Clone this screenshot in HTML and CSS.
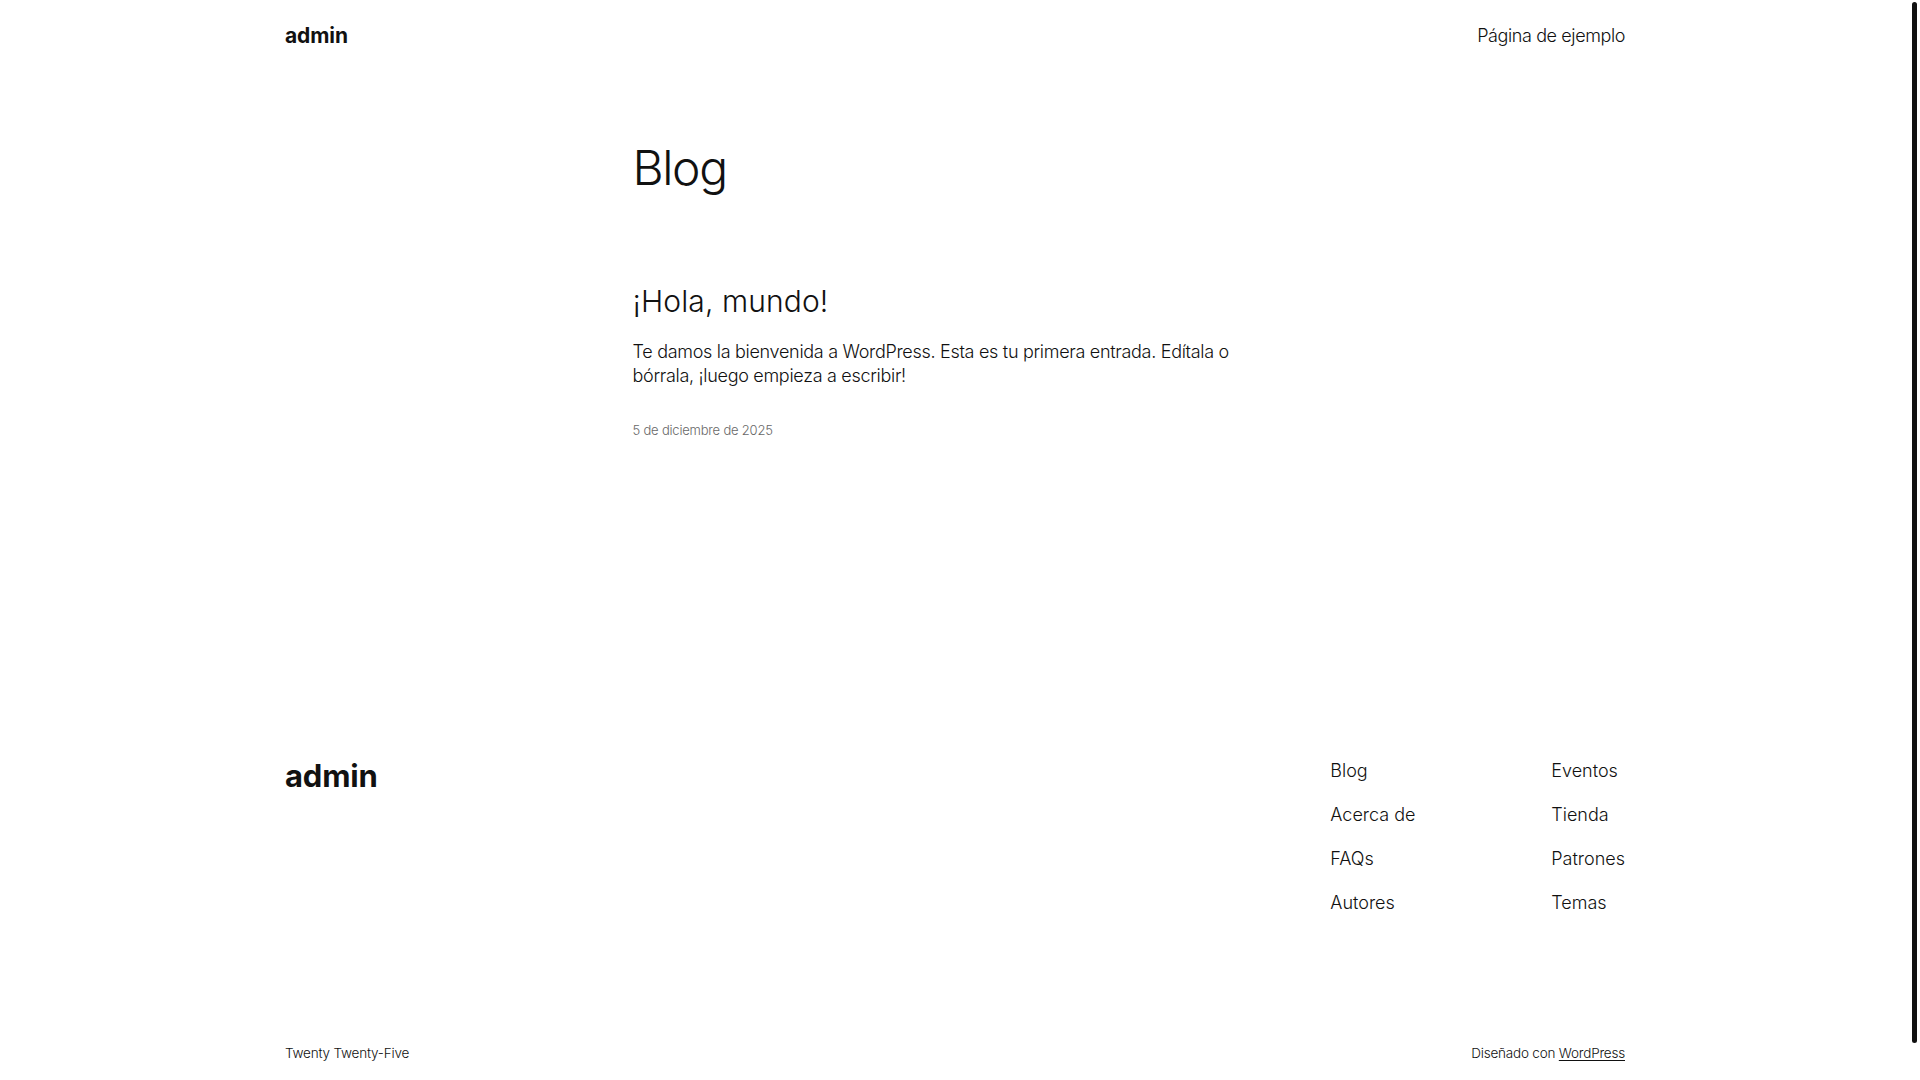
FILE: index.html
```html
<!DOCTYPE html>
<html lang="es">
<head>
<meta charset="utf-8">
<title>Blog – admin</title>
<link rel="stylesheet" href="styles.css">
</head>
<body>
<div class="scroll-thumb" aria-hidden="true"></div>
<header class="site-header">
  <div class="wrap header-row">
    <a class="site-title" href="#">admin</a>
    <nav class="header-nav"><a href="#">Página de ejemplo</a></nav>
  </div>
</header>
<main class="main">
  <div class="content">
    <h1 class="page-title">Blog</h1>
    <article class="post">
      <h2 class="post-title"><a href="#">¡Hola, mundo!</a></h2>
      <p class="excerpt">Te damos la bienvenida a WordPress. Esta es tu primera entrada. Edítala o bórrala, ¡luego empieza a escribir!</p>
      <time class="post-date">5 de diciembre de 2025</time>
    </article>
  </div>
</main>
<footer class="site-footer">
  <div class="wrap footer-top">
    <a class="footer-title" href="#">admin</a>
    <nav class="footer-nav">
      <ul class="nav-col">
        <li><a href="#">Blog</a></li>
        <li><a href="#">Acerca de</a></li>
        <li><a href="#">FAQs</a></li>
        <li><a href="#">Autores</a></li>
      </ul>
      <ul class="nav-col">
        <li><a href="#">Eventos</a></li>
        <li><a href="#">Tienda</a></li>
        <li><a href="#">Patrones</a></li>
        <li><a href="#">Temas</a></li>
      </ul>
    </nav>
  </div>
  <div class="wrap footer-bottom">
    <p class="credit">Twenty Twenty-Five</p>
    <p class="credit">Diseñado con <a class="credit-link" href="#">WordPress</a></p>
  </div>
</footer>
</body>
</html>
```
FILE: styles.css
```css
html {
  background: #fff;
}
body {
  margin: 0;
  padding-right: 10px;
  font-family: Inter, "Noto Sans", sans-serif;
  font-weight: 300;
  color: #111111;
  font-size: 18px;
  line-height: 24px;
}
.scroll-thumb {
  position: fixed;
  top: 2px;
  right: 3px;
  width: 5px;
  height: 1041px;
  background: #111;
  border-radius: 3px;
  z-index: 10;
}
a {
  color: inherit;
  text-decoration: none;
}
.wrap {
  width: 1340px;
  margin: 0 auto;
}
.site-header {
  padding: 22px 0;
}
.header-row {
  display: flex;
  justify-content: space-between;
  align-items: center;
  line-height: 28px;
}
.site-title {
  font-size: 21px;
  font-weight: 700;
  letter-spacing: -0.1px;
}
.header-nav {
  font-size: 18px;
  letter-spacing: -0.4px;
}
.content {
  width: 645px;
  margin: 0 auto;
}
.page-title {
  margin: 69px 0 0;
  font-size: 48px;
  line-height: 54px;
  font-weight: 300;
  letter-spacing: -1.4px;
}
.post {
  margin-top: 89px;
}
.post-title {
  margin: 0;
  font-size: 30px;
  line-height: 34px;
  font-weight: 300;
  letter-spacing: 0.1px;
}
.excerpt {
  margin: 22px 0 0;
  letter-spacing: -0.3px;
}
.post-date {
  display: block;
  margin-top: 32px;
  font-size: 13px;
  line-height: 20px;
  color: #686868;
  letter-spacing: -0.2px;
}
.site-footer {
  margin-top: 318px;
  padding-bottom: 57px;
}
.footer-top {
  display: flex;
  justify-content: space-between;
  align-items: flex-start;
}
.footer-title {
  font-size: 31px;
  line-height: 36px;
  font-weight: 700;
  letter-spacing: -0.2px;
}
.footer-nav {
  display: grid;
  grid-template-columns: 221px auto;
  margin-top: 1px;
}
.nav-col {
  list-style: none;
  margin: 0;
  padding: 0;
  display: flex;
  flex-direction: column;
  gap: 20px;
  letter-spacing: 0;
}
.footer-bottom {
  display: flex;
  justify-content: space-between;
  margin-top: 128px;
}
.credit {
  margin: 0;
  font-size: 13.5px;
  line-height: 20px;
  letter-spacing: -0.2px;
}
.credit-link {
  text-decoration: underline;
  text-underline-offset: 2px;
}
```
